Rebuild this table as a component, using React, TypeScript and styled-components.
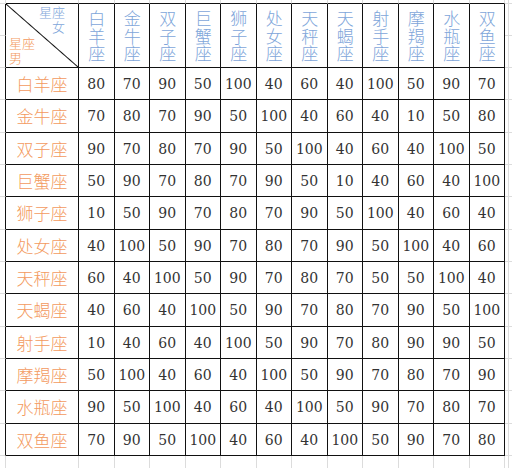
import React from "react";
import styled, { createGlobalStyle } from "styled-components";

const GlobalStyle = createGlobalStyle`
  html, body { margin: 0; padding: 0; background: #ffffff; }
  body { font-family: "Noto Sans CJK SC", "Noto Sans", sans-serif; }
`;

type Line = "ink" | "grid" | "none";

const lineColor = (l: Line) =>
  l === "ink" ? "1px solid #111111" : l === "grid" ? "1px solid #dcdcdc" : "0 none";

const Sheet = styled.div`
  display: grid;
  grid-template-columns: 6px 73px repeat(12, 35.5px) 4px 3px;
  grid-template-rows: 4px 32px 32px repeat(12, 32.333px) 12px;
  width: 512px;
  height: 468px;
  overflow: hidden;
`;

const Cell = styled.div<{ $r: Line; $b: Line }>`
  box-sizing: border-box;
  border-right: ${(p) => lineColor(p.$r)};
  border-bottom: ${(p) => lineColor(p.$b)};
  min-width: 0;
  min-height: 0;
`;

const Corner = styled(Cell)`
  grid-row: span 2;
  display: flex;
  flex-direction: column;
  justify-content: space-between;
  padding: 1px 13px 2px 3px;
  font-size: 13px;
  line-height: 14.5px;
  font-weight: 300;
  background: linear-gradient(
    to top right,
    transparent calc(50% - 1px),
    #111111 50%,
    transparent calc(50% + 1px)
  );
`;

const CornerTop = styled.div`
  align-self: flex-end;
  text-align: right;
  color: #7ea6da;
`;

const CornerBottom = styled.div`
  align-self: flex-start;
  text-align: left;
  color: #f39a60;
`;

const ColHead = styled(Cell)`
  grid-row: span 2;
  display: flex;
  flex-direction: column;
  align-items: center;
  justify-content: center;
  font-size: 17px;
  line-height: 17.5px;
  font-weight: 300;
  color: #7ea6da;
  padding-left: 1px;
`;

const RowHead = styled(Cell)`
  display: flex;
  align-items: center;
  justify-content: center;
  font-size: 17px;
  font-weight: 300;
  color: #f39a60;
`;

const Value = styled(Cell)`
  display: flex;
  align-items: center;
  justify-content: center;
  font-family: "DejaVu Serif", "Liberation Serif", serif;
  font-size: 14px;
  color: #333333;
  padding-top: 1px;
`;

const signs = [
  "白羊座",
  "金牛座",
  "双子座",
  "巨蟹座",
  "狮子座",
  "处女座",
  "天秤座",
  "天蝎座",
  "射手座",
  "摩羯座",
  "水瓶座",
  "双鱼座",
];

const scores: number[][] = [
  [80, 70, 90, 50, 100, 40, 60, 40, 100, 50, 90, 70],
  [70, 80, 70, 90, 50, 100, 40, 60, 40, 10, 50, 80],
  [90, 70, 80, 70, 90, 50, 100, 40, 60, 40, 100, 50],
  [50, 90, 70, 80, 70, 90, 50, 10, 40, 60, 40, 100],
  [10, 50, 90, 70, 80, 70, 90, 50, 100, 40, 60, 40],
  [40, 100, 50, 90, 70, 80, 70, 90, 50, 100, 40, 60],
  [60, 40, 100, 50, 90, 70, 80, 70, 50, 50, 100, 40],
  [40, 60, 40, 100, 50, 90, 70, 80, 70, 90, 50, 100],
  [10, 40, 60, 40, 100, 50, 90, 70, 80, 90, 90, 50],
  [50, 100, 40, 60, 40, 100, 50, 90, 70, 80, 70, 90],
  [90, 50, 100, 40, 60, 40, 100, 50, 90, 70, 80, 70],
  [70, 90, 50, 100, 40, 60, 40, 100, 50, 90, 70, 80],
];

export default function App() {
  const cells: React.ReactNode[] = [];
  let k = 0;
  const ghost = (r: Line, b: Line) => <Cell key={k++} $r={r} $b={b} />;

  // top gutter row
  cells.push(ghost("grid", "grid"));
  for (let c = 0; c < 13; c++) cells.push(ghost("grid", "ink"));
  cells.push(ghost("grid", "grid"));
  cells.push(ghost("none", "grid"));

  // header (two sheet rows)
  cells.push(ghost("ink", "grid"));
  cells.push(
    <Corner key={k++} $r="ink" $b="ink">
      <CornerTop>
        星座
        <br />
        女
      </CornerTop>
      <CornerBottom>
        星座
        <br />
        男
      </CornerBottom>
    </Corner>
  );
  signs.forEach((s) =>
    cells.push(
      <ColHead key={k++} $r="ink" $b="ink">
        {s.split("").map((ch, i) => (
          <span key={i}>{ch}</span>
        ))}
      </ColHead>
    )
  );
  cells.push(ghost("grid", "grid"));
  cells.push(ghost("none", "grid"));
  cells.push(ghost("ink", "grid"));
  cells.push(ghost("grid", "grid"));
  cells.push(ghost("none", "grid"));

  // data rows
  signs.forEach((s, ri) => {
    cells.push(ghost("ink", "grid"));
    cells.push(
      <RowHead key={k++} $r="ink" $b="ink">
        {s}
      </RowHead>
    );
    scores[ri].forEach((v) =>
      cells.push(
        <Value key={k++} $r="ink" $b="ink">
          {v}
        </Value>
      )
    );
    cells.push(ghost("grid", "grid"));
    cells.push(ghost("none", "grid"));
  });

  // bottom gutter row
  for (let c = 0; c < 15; c++) cells.push(ghost("grid", "none"));
  cells.push(ghost("none", "none"));

  return (
    <>
      <GlobalStyle />
      <Sheet>{cells}</Sheet>
    </>
  );
}
